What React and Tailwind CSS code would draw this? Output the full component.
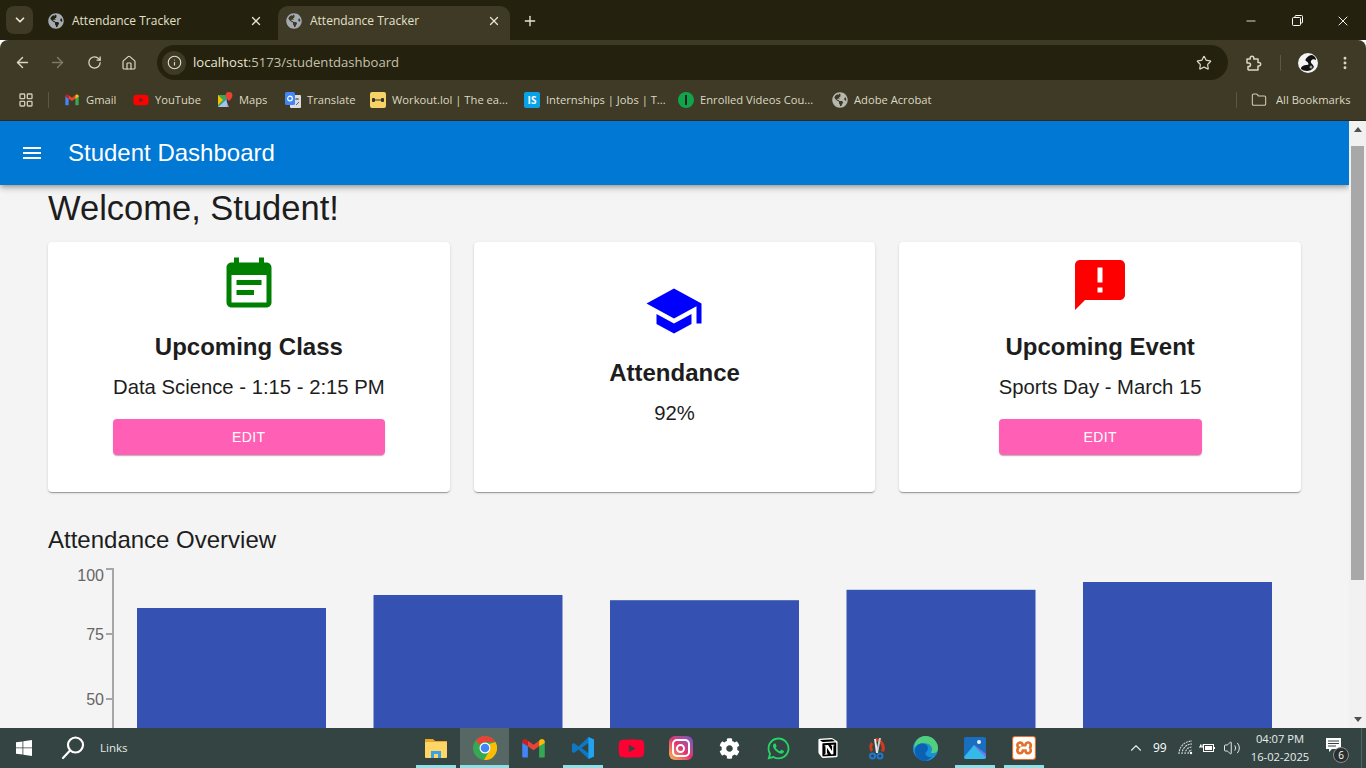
import React from "react";
import { FaGlobeAmericas, FaYoutube, FaWhatsapp, FaCog } from "react-icons/fa";
import { SiNotion, SiXampp } from "react-icons/si";
import { ArrowLeft, ArrowRight, RotateCw, Home, Info, Star, MoreVertical, ChevronDown, X, Plus, Minus, Folder, LayoutGrid, ChevronUp, Volume2 } from "lucide-react";

const ui = "font-['Open_Sans','Noto_Sans',sans-serif]";

function Mi({ d, size, color }) {
  return (
    <svg width={size} height={size} viewBox="0 0 24 24" fill={color} className="shrink-0">
      <path d={d} />
    </svg>
  );
}

const EVENT = "M17 10H7v2h10v-2zm2-7h-1V1h-2v2H8V1H6v2H5c-1.11 0-1.99.9-1.99 2L3 19c0 1.1.89 2 2 2h14c1.1 0 2-.9 2-2V5c0-1.1-.9-2-2-2zm0 16H5V8h14v11zm-5-5H7v2h7v-2z";
const SCHOOL = "M5 13.18v4L12 21l7-3.82v-4L12 17l-7-3.82zM12 3 1 9l11 6 9-4.91V17h2V9L12 3z";
const ANNOUNCE = "M20 2H4c-1.1 0-1.99.9-1.99 2L2 22l4-4h14c1.1 0 2-.9 2-2V4c0-1.1-.9-2-2-2zm-7 9h-2V5h2v6zm0 4h-2v-2h2v2z";
const MENU = "M3 18h18v-2H3v2zm0-5h18v-2H3v2zm0-7v2h18V6H3z";

function Gmail({ s = 16 }) {
  return (
    <svg width={s} height={s} viewBox="0 0 24 24" className="shrink-0">
      <path d="M2 20V6l5 3.5V20H3a1 1 0 0 1-1-1z" fill="#4285f4" />
      <path d="M22 20V6l-5 3.5V20h4a1 1 0 0 0 1-1z" fill="#34a853" />
      <path d="M7 10 12 13.5 17 10V5l-5 3.7L7 5z" fill="#ea4335" />
      <path d="M2 7V6c0-2 2.4-3 4-1.9L7 5v5z" fill="#c5221f" />
      <path d="M22 7V6c0-2-2.4-3-4-1.9L17 5v5z" fill="#fbbc04" />
    </svg>
  );
}

function MapsIcon() {
  return (
    <svg width="16" height="16" viewBox="0 0 16 16" className="shrink-0">
      <path d="M1 3h9v12H1z" fill="#34a853" />
      <path d="M1 15 10 6v9z" fill="#4285f4" />
      <path d="M1 3l5 5-5 5z" fill="#fbbc04" />
      <path d="M1 15 9 8l3 7z" fill="#f8f5e8" opacity=".55" />
      <path d="M12 0a3.4 3.4 0 0 0-3.4 3.4C8.600 6 12 9 12 9s3.400-3 3.400-5.600A3.400 3.400 0 0 0 12 0z" fill="#ea4335" />
    </svg>
  );
}

function TranslateIcon() {
  return (
    <svg width="16" height="17" viewBox="0 0 16 17" className="shrink-0">
      <rect x="5" y="3" width="11" height="13" rx="1" fill="#dadce0" />
      <rect x="0" y="0" width="10" height="13" rx="1.500" fill="#4285f4" />
      <circle cx="5" cy="6.500" r="2.300" fill="none" stroke="#fff" strokeWidth="1.200" />
      <path d="M10 7h4M12 6v2" stroke="#5f6368" strokeWidth="1" />
      <path d="M11 13l3-3" stroke="#5f6368" strokeWidth="1" />
    </svg>
  );
}

function WorkoutIcon() {
  return (
    <svg width="16" height="16" viewBox="0 0 16 16" className="shrink-0">
      <rect width="16" height="16" rx="2" fill="#f7d366" />
      <path d="M5 8h6" stroke="#333" strokeWidth="1" />
      <rect x="2" y="6" width="3" height="4" rx="1" fill="#333" />
      <rect x="11" y="6" width="3" height="4" rx="1" fill="#333" />
    </svg>
  );
}

function GlobeSm({ s = 16, c = "#a8acad" }) {
  return <FaGlobeAmericas size={s} color={c} className="shrink-0" />;
}

function Bookmark({ icon, text, w }) {
  return (
    <div className="flex items-center gap-1.5 mr-4 shrink-0">
      {icon}
      <span className={`${w} whitespace-nowrap text-[11.2px] text-[#dcd9c4]`}>{text}</span>
    </div>
  );
}

function Tab({ active, widthCls }) {
  return (
    <div className={`${widthCls} h-[34px] flex items-center pl-[8px] pr-[9px] pb-[5px] rounded-t-[10px] ${active ? "bg-[#3e3a25]" : ""}`}>
      <GlobeSm s={16} c="#a5abb2" />
      <span className="ml-2 text-[12px] text-[#e3e0ca] flex-1 whitespace-nowrap">Attendance Tracker</span>
      <X size={14} color="#e8e5d0" strokeWidth={2.2} />
    </div>
  );
}

function ChromeIcon() {
  return (
    <svg width="24" height="24" viewBox="0 0 24 24">
      <circle cx="12" cy="12" r="12" fill="#34a853" />
      <path d="M12 0a12 12 0 0 1 10.400 6H12a6 6 0 0 0-5.200 3L2.600 4.700A12 12 0 0 1 12 0z" fill="#ea4335" />
      <path d="M22.400 6A12 12 0 0 1 11 24l5.200-9A6 6 0 0 0 16 8z" fill="#fbbc04" />
      <circle cx="12" cy="12" r="5.500" fill="#fff" />
      <circle cx="12" cy="12" r="4.300" fill="#4285f4" />
    </svg>
  );
}

function ExplorerIcon() {
  return (
    <svg width="24" height="24" viewBox="0 0 24 24">
      <path d="M1 3h8l2 2h12v4H1z" fill="#e9a825" />
      <rect x="1" y="6" width="22" height="16" rx="1" fill="#ffd666" />
      <path d="M7 15h10v7h-3v-4h-4v4H7z" fill="#3aa0e8" />
    </svg>
  );
}

function VsCodeIcon() {
  return (
    <svg width="24" height="24" viewBox="0 0 24 24">
      <path d="M17.500 1 7.500 10.500 3 7 1 8v8l2 1 4.500-3.500L17.500 23l5.500-2.500v-17zM17.500 7v10L10.500 12z" fill="#0e78c5" />
      <path d="M17.500 1 23 3.500v17L17.500 23z" fill="#22a3f0" />
    </svg>
  );
}

function InstaIcon() {
  return (
    <div className="w-[24px] h-[24px] rounded-[6px] bg-gradient-to-tr from-[#fdb53d] via-[#e0306f] to-[#6a4fc8] flex items-center justify-center">
      <div className="w-[18px] h-[18px] rounded-[5px] border-2 border-white flex items-center justify-center relative">
        <div className="w-[9px] h-[9px] rounded-full border-2 border-white" />
      </div>
    </div>
  );
}

function SnipIcon() {
  return (
    <svg width="24" height="24" viewBox="0 0 24 24">
      <path d="M10 2a10 10 0 0 1 9 14l-3-1a7 7 0 0 0-6-10z" fill="#d13a1e" />
      <path d="M6 6a9 9 0 0 0 0 10l2-2a6 6 0 0 1 0-6z" fill="#d13a1e" />
      <path d="M14 2l-3 15h2l3-15z" fill="#c8c8c8" />
      <path d="M9 3l2 14h2L11 3z" fill="#e8e8e8" />
      <circle cx="7.500" cy="20" r="2.500" fill="none" stroke="#2277d0" strokeWidth="2" />
      <circle cx="15" cy="20" r="2.500" fill="none" stroke="#2277d0" strokeWidth="2" />
    </svg>
  );
}

function EdgeIcon() {
  return (
    <svg width="25" height="25" viewBox="0 0 24 24">
      <circle cx="12" cy="12" r="12" fill="#1b8fd6" />
      <path d="M12 0a12 12 0 0 1 12 12c0 4-4 5-7 4 2-2 2-6-2-8C9 5 3 8 1 12 1 5 6 0 12 0z" fill="#52cf7a" />
      <path d="M2 13c1-5 6-7 10-5 3 2 3 5 1 7-3 2 1 6 5 5a12 12 0 0 1-6 4C5 24 1 19 2 13z" fill="#0b62b5" />
    </svg>
  );
}

function PhotosIcon() {
  return (
    <svg width="24" height="24" viewBox="0 0 24 24">
      <rect x="1" y="1" width="22" height="22" rx="2" fill="#1a6ec0" />
      <circle cx="16" cy="6" r="2" fill="#e8eeff" />
      <path d="M1 21 11 9l12 9v3a2 2 0 0 1-2 2H3a2 2 0 0 1-2-2z" fill="#35b8ea" />
      <path d="M11 9l12 9v3L15 14z" fill="#7a6fe0" />
    </svg>
  );
}

function TaskIcon({ children, active, line }) {
  return (
    <div className={`w-[49px] h-full flex items-center justify-center relative shrink-0 ${active ? "bg-[#566764]" : ""}`}>
      {children}
      {line && <div className={`absolute bottom-0 h-[3px] bg-[#8fdfe6] ${active ? "left-0 right-0" : "left-[5px] right-[4px]"}`} />}
    </div>
  );
}

function InfoCard({ icon, title, text, button }) {
  return (
    <div className={`bg-white rounded-[4px] h-[250px] shadow-[0_2px_1px_-1px_rgba(0,0,0,0.2),0_1px_1px_0_rgba(0,0,0,0.14),0_1px_3px_0_rgba(0,0,0,0.12)] flex flex-col items-center justify-center ${button ? "pb-[25px]" : "pb-[27px]"}`}>
      {icon}
      <h2 className="text-[24px] leading-[32px] font-bold text-[#1d1d1d] mt-[16px]">{title}</h2>
      <p className="text-[20.3px] leading-[28px] text-[#1d1d1d] mt-[10px]">{text}</p>
      {button && (
        <button className="mt-[18px] h-[36px] pt-[1px] rounded-[4px] bg-[#ff5fb5] text-white text-[14px] tracking-[0.4px] shadow-[0_2px_1px_-1px_rgba(0,0,0,0.2),0_1px_2px_0_rgba(0,0,0,0.14)]" style={{ width: button }}>
          EDIT
        </button>
      )}
    </div>
  );
}

function Chart() {
  const bars = [85, 90, 88, 92, 95];
  const xs = [137, 373.500, 610, 846.500, 1083];
  const ox = 48;
  const oy = 568;
  return (
    <svg width="1240" height="200" className="block mt-[12px]" fontFamily="'Liberation Sans', sans-serif">
      <path d={`M${113 - ox} 0V200`} stroke="#a6a6a6" strokeWidth="2" fill="none" />
      {[[100, 0, 13], [75, 65, 7], [50, 130, 7]].map(([l, y, dy]) => (
        <g key={l}>
          <path d={`M${106 - ox} ${y + 1}H${113 - ox}`} stroke="#a6a6a6" strokeWidth="2" />
          <text x={104 - ox} y={y + dy} textAnchor="end" fontSize="16" fill="#666">{l}</text>
        </g>
      ))}
      {bars.map((b, i) => (
        <rect key={i} x={xs[i] - ox} y={829 - b * 2.6 - oy} width="189" height="300" fill="#3552b2" />
      ))}
    </svg>
  );
}

export default function App() {
  return (
    <div className={`w-[1366px] h-[768px] overflow-hidden flex flex-col ${ui}`}>
      {/* tab strip */}
      <div className="h-[40px] bg-[#24220e] flex items-stretch shrink-0">
        <div className="ml-[6px] mt-[6px] w-[27px] h-[28px] rounded-[8px] bg-[#3e3a25] flex items-center justify-center shrink-0">
          <ChevronDown size={14} color="#e8e5d0" strokeWidth={3} />
        </div>
        <div className="ml-[7px] flex items-end"><Tab widthCls="w-[232px]" /></div>
        <div className="ml-[6px] flex items-end"><Tab active widthCls="w-[232px]" /></div>
        <div className="w-[40px] flex items-center justify-center mt-[1px]">
          <Plus size={16} color="#e8e5d0" strokeWidth={2} />
        </div>
        <div className="flex-1" />
        <div className="flex items-center mt-[1px]">
          <div className="w-[46px] flex justify-center"><Minus size={14} color="#fff" strokeWidth={1.4} /></div>
          <div className="w-[46px] flex justify-center">
            <svg width="11" height="11" viewBox="0 0 11 11" fill="none" stroke="#fff"><rect x="0.500" y="2.500" width="8" height="8" rx="1" /><path d="M3 2.500V1.500a1 1 0 0 1 1-1h5.500a1 1 0 0 1 1 1V7a1 1 0 0 1-1 1h-1" /></svg>
          </div>
          <div className="w-[46px] flex justify-center"><X size={16} color="#fff" strokeWidth={1.4} /></div>
        </div>
      </div>

      {/* toolbar */}
      <div className="h-[45px] bg-[#3e3a25] flex items-center shrink-0 rounded-t-[8px]">
        <div className="w-[157px] flex items-center shrink-0">
          <div className="w-[44px] flex justify-center"><ArrowLeft size={17} color="#dbd8c2" strokeWidth={2} /></div>
          <div className="w-[27px] flex justify-center"><ArrowRight size={17} color="#7d7a64" strokeWidth={2} /></div>
          <div className="w-[46px] flex justify-center"><RotateCw size={15} color="#dbd8c2" strokeWidth={2} /></div>
          <div className="w-[24px] flex justify-center"><Home size={16} color="#dbd8c2" strokeWidth={1.8} /></div>
        </div>
        <div className="w-[1071px] h-[35px] rounded-full bg-[#24220e] flex items-center shrink-0">
          <div className="ml-[5px] w-[24px] h-[24px] rounded-full bg-[#3e3a25] flex items-center justify-center"><Info size={15} color="#e3e0ca" strokeWidth={1.8} /></div>
          <span className="ml-[7px] pt-[1px] text-[13.1px] text-[#e9e6d2] whitespace-nowrap">localhost<span className="text-[#c4c1ab]">:5173/studentdashboard</span></span>
          <div className="flex-1" />
          <Star size={16} color="#dbd8c2" strokeWidth={1.8} className="mr-[16px]" />
        </div>
        <div className="ml-[17px] w-[18px] flex justify-center">
          <svg width="18" height="18" viewBox="0 0 18 18" fill="none" stroke="#dbd8c2" strokeWidth="1.500" strokeLinejoin="round">
            <path d="M2 5h3.200V4a1.800 1.800 0 0 1 3.600 0v1H13v3.500h1a1.700 1.700 0 0 1 0 3.400h-1V16H3.500L3 15.500V12.500h.7a1.800 1.800 0 0 0 0-3.600H2z" />
          </svg>
        </div>
        <div className="ml-[17px] w-px h-[16px] bg-[#5c5840]" />
        <div className="ml-[17px] w-[20px] h-[20px] shrink-0">
          <svg width="20" height="20" viewBox="0 0 20 20">
            <circle cx="10" cy="10" r="10" fill="#f4f4f4" />
            <path d="M3 16c0-3 3-4 6-4s1-3-1-4 2-6 6-6c3 1 4 3 4 5-2-1-4-1-5 1s2 3 3 6c-2 3-5 4-7 4s-5-1-6-2z" fill="#111" />
            <circle cx="13" cy="14" r="1.500" fill="#999" />
          </svg>
        </div>
        <div className="ml-[17px] w-[20px] flex justify-center"><MoreVertical size={16} color="#dbd8c2" strokeWidth={2.4} /></div>
      </div>

      {/* bookmarks */}
      <div className="h-[36px] bg-[#3e3a25] flex items-center pb-[5px] border-b border-[#2e2b1a] shrink-0">
        <div className="ml-[18px] w-[16px]"><LayoutGrid size={16} color="#cfccb6" strokeWidth={2} /></div>
        <div className="ml-[14px] mr-[15px] w-px h-[16px] bg-[#5c5840]" />
        <Bookmark icon={<Gmail />} w="w-[31px]" text="Gmail" />
        <Bookmark icon={<FaYoutube size={16} color="#ff0000" className="shrink-0" />} w="w-[46px]" text="YouTube" />
        <Bookmark icon={<MapsIcon />} w="w-[30px]" text="Maps" />
        <Bookmark icon={<TranslateIcon />} w="w-[47px]" text="Translate" />
        <Bookmark icon={<WorkoutIcon />} w="w-[116px]" text="Workout.lol | The ea..." />
        <Bookmark icon={<div className="w-[16px] h-[16px] rounded-[2px] bg-[#08a2e8] text-white text-[10px] font-bold leading-[16px] text-center shrink-0">IS</div>} w="w-[116px]" text="Internships | Jobs | T..." />
        <Bookmark icon={<div className="w-[16px] h-[16px] rounded-full bg-[#10a54a] shrink-0 flex items-center justify-center"><div className="w-[2px] h-[10px] bg-[#222]" /></div>} w="w-[116px]" text="Enrolled Videos Cou..." />
        <Bookmark icon={<GlobeSm s={16} c="#b5b7ae" />} w="w-[82px]" text="Adobe Acrobat" />
        <div className="flex-1" />
        <div className="w-px h-[16px] bg-[#5c5840] mr-[14px]" />
        <Folder size={16} color="#cfccb6" strokeWidth={1.600} className="mr-[9px]" />
        <span className="text-[11.2px] text-[#dcd9c4] whitespace-nowrap mr-[14px] w-[76px]">All Bookmarks</span>
      </div>

      {/* page */}
      <div className="flex-1 min-h-0 flex font-['Liberation_Sans',Arial,sans-serif]">
        <div className="flex-1 min-w-0 bg-[#f4f4f4] flex flex-col overflow-hidden">
          <header className="h-[64px] shrink-0 bg-[#0078d4] flex items-center pl-[20px] text-white relative z-10 shadow-[0_2px_4px_-1px_rgba(0,0,0,0.2),0_4px_5px_0_rgba(0,0,0,0.14),0_1px_10px_0_rgba(0,0,0,0.12)]">
            <Mi d={MENU} size={24} color="#fff" />
            <h1 className="ml-[24px] text-[24px] font-normal leading-none -mt-[1px]">Student Dashboard</h1>
          </header>
          <main className="pl-[48px] pr-[48px] flex-1">
            <h2 className="text-[34.5px] leading-[40px] text-[#1d1d1d] mt-[3px]">Welcome, Student!</h2>
            <div className="grid grid-cols-3 gap-x-[24px] mt-[14px] w-[1253px]">
              <InfoCard icon={<Mi d={EVENT} size={60} color="#008000" />} title="Upcoming Class" text="Data Science - 1:15 - 2:15 PM" button="272px" />
              <InfoCard icon={<Mi d={SCHOOL} size={60} color="#0000ff" />} title="Attendance" text="92%" />
              <InfoCard icon={<Mi d={ANNOUNCE} size={60} color="#ff0000" />} title="Upcoming Event" text="Sports Day - March 15" button="203px" />
            </div>
            <h3 className="text-[24px] leading-[32px] text-[#1d1d1d] mt-[32px]">Attendance Overview</h3>
            <Chart />
          </main>
        </div>
        <div className="w-[17px] shrink-0 bg-[#f1f1f1] flex flex-col items-center">
          <div className="h-[17px] w-full flex items-center justify-center">
            <div className="w-0 h-0 border-x-[4px] border-x-transparent border-b-[5px] border-b-[#505050]" />
          </div>
          <div className="w-[13px] h-[434px] mt-[8px] bg-[#a8a8a8]" />
          <div className="flex-1" />
          <div className="h-[17px] w-full flex items-center justify-center">
            <div className="w-0 h-0 border-x-[4px] border-x-transparent border-t-[5px] border-t-[#505050]" />
          </div>
        </div>
      </div>

      {/* taskbar */}
      <div className="h-[40px] shrink-0 bg-[#334442] flex items-stretch text-white">
        <div className="w-[411px] shrink-0 flex items-center">
          <svg width="16" height="16" viewBox="0 0 16 16" className="ml-[16px]" fill="#fff"><path d="M0 2.300 6.500 1.400V7.500H0zM7.300 1.300 16 0V7.500H7.300zM0 8.300H6.500V14.600L0 13.700zM7.300 8.300H16V16L7.300 14.700z" /></svg>
          <svg width="24" height="24" viewBox="0 0 24 24" className="ml-[29px]" fill="none" stroke="#fff" strokeWidth="2.200"><circle cx="14.500" cy="9" r="7.500" /><path d="M9 14.500 2 22" strokeLinecap="round" /></svg>
          <span className="ml-[15px] text-[11.5px] text-[#e6e9e8]">Links</span>
        </div>
        <div className="flex items-stretch">
          <TaskIcon line><ExplorerIcon /></TaskIcon>
          <TaskIcon active line><ChromeIcon /></TaskIcon>
          <TaskIcon><Gmail s={27} /></TaskIcon>
          <TaskIcon line><VsCodeIcon /></TaskIcon>
          <TaskIcon><FaYoutube size={27} color="#ff0033" /></TaskIcon>
          <TaskIcon><InstaIcon /></TaskIcon>
          <TaskIcon><FaCog size={21} color="#fff" /></TaskIcon>
          <TaskIcon><FaWhatsapp size={25} color="#25d366" /></TaskIcon>
          <TaskIcon><div className="relative w-[20px] h-[20px]"><div className="absolute inset-[2px] bg-black" /><SiNotion size={20} color="#fff" className="absolute inset-0" /></div></TaskIcon>
          <TaskIcon><SnipIcon /></TaskIcon>
          <TaskIcon><EdgeIcon /></TaskIcon>
          <TaskIcon line><PhotosIcon /></TaskIcon>
          <TaskIcon line><div className="w-[24px] h-[24px] rounded-[3px] bg-[#e2702a] flex items-center justify-center"><SiXampp size={22} color="#fff" /></div></TaskIcon>
        </div>
        <div className="flex-1 flex items-center justify-end">
          <ChevronUp size={18} color="#e8ecec" strokeWidth={1.500} className="mr-[8px]" />
          <span className="text-[12px] text-white mr-[10px] w-[15px]">99</span>
          <svg width="16" height="16" viewBox="0 0 16 16" fill="none" stroke="#d8dddc" strokeWidth="1.100" className="mr-[5px]">
            <path d="M1 14A13 13 0 0 1 14 1M4 14A10 10 0 0 1 14 4M7 14a7 7 0 0 1 7-7M10 14a4 4 0 0 1 4-4" strokeDasharray="2 0.800" />
            <circle cx="13" cy="13" r="1.200" fill="#fff" stroke="none" />
          </svg>
          <svg width="16" height="12" viewBox="0 0 16 12" fill="none" stroke="#fff" className="mr-[8px]"><rect x="4.500" y="2.500" width="10" height="7" /><rect x="6" y="4" width="7" height="4" fill="#fff" stroke="none" /><path d="M15.500 5v2M0 5h4M1.500 2.500v2.500M3 2.500v2.500" /></svg>
          <Volume2 size={18} color="#e8ecec" strokeWidth={1.300} className="mr-[8px]" />
          <div className="w-[62px] flex flex-col items-center text-[11.2px] leading-[18px] text-[#e8ecec] whitespace-nowrap">
            <span>04:07 PM</span>
            <span>16-02-2025</span>
          </div>
          <div className="relative w-[24px] h-[24px] ml-[13px] mr-[13px] -mt-[1px]">
            <svg width="17" height="15" viewBox="0 0 17 15" className="absolute left-[1px] top-[1px]"><path d="M1 1h15v11H7l-3 3v-3H1z" fill="#fff" /><path d="M3 4h11M3 6.500h11M3 9h8" stroke="#334442" /></svg>
            <div className="absolute right-[-1px] bottom-[-3px] w-[16px] h-[16px] rounded-full bg-[#2a2f2e] border border-[#8a8f8e] text-[10px] leading-[14px] text-center text-white">6</div>
          </div>
          <div className="w-px h-full bg-[#55635f] mr-[4px]" />
        </div>
      </div>
    </div>
  );
}
